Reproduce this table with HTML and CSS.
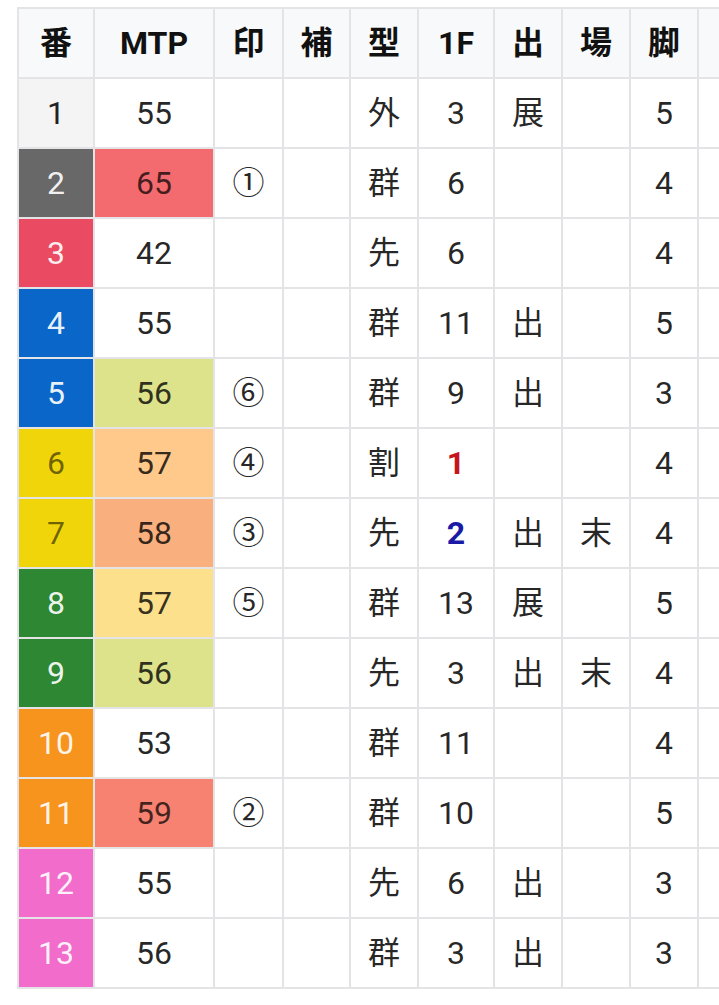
FILE: index.html
```html
<!DOCTYPE html>
<html lang="ja">
<head>
<meta charset="utf-8">
<title>出走表</title>
<link rel="stylesheet" href="styles.css">
</head>
<body>
<div class="wrap">
<table class="race">
  <colgroup>
    <col class="w-no"><col class="w-mtp"><col class="w-mark"><col class="w-sub"><col class="w-type"><col class="w-1f"><col class="w-out"><col class="w-place"><col class="w-leg"><col class="w-extra">
  </colgroup>
  <thead>
    <tr><th>番</th><th>MTP</th><th>印</th><th>補</th><th>型</th><th>1F</th><th>出</th><th>場</th><th>脚</th><th></th></tr>
  </thead>
  <tbody>
    <tr><td class="no n1">1</td><td>55</td><td></td><td></td><td>外</td><td>3</td><td>展</td><td></td><td>5</td><td></td></tr>
    <tr><td class="no n2">2</td><td class="m65">65</td><td>①</td><td></td><td>群</td><td>6</td><td></td><td></td><td>4</td><td></td></tr>
    <tr><td class="no n3">3</td><td>42</td><td></td><td></td><td>先</td><td>6</td><td></td><td></td><td>4</td><td></td></tr>
    <tr><td class="no n4">4</td><td>55</td><td></td><td></td><td>群</td><td>11</td><td>出</td><td></td><td>5</td><td></td></tr>
    <tr><td class="no n4">5</td><td class="m56">56</td><td>⑥</td><td></td><td>群</td><td>9</td><td>出</td><td></td><td>3</td><td></td></tr>
    <tr><td class="no n6">6</td><td class="m57a">57</td><td>④</td><td></td><td>割</td><td class="r1">1</td><td></td><td></td><td>4</td><td></td></tr>
    <tr><td class="no n6">7</td><td class="m58">58</td><td>③</td><td></td><td>先</td><td class="r2">2</td><td>出</td><td>末</td><td>4</td><td></td></tr>
    <tr><td class="no n8">8</td><td class="m57b">57</td><td>⑤</td><td></td><td>群</td><td>13</td><td>展</td><td></td><td>5</td><td></td></tr>
    <tr><td class="no n8">9</td><td class="m56">56</td><td></td><td></td><td>先</td><td>3</td><td>出</td><td>末</td><td>4</td><td></td></tr>
    <tr><td class="no n10">10</td><td>53</td><td></td><td></td><td>群</td><td>11</td><td></td><td></td><td>4</td><td></td></tr>
    <tr><td class="no n10">11</td><td class="m59">59</td><td>②</td><td></td><td>群</td><td>10</td><td></td><td></td><td>5</td><td></td></tr>
    <tr><td class="no n12">12</td><td>55</td><td></td><td></td><td>先</td><td>6</td><td>出</td><td></td><td>3</td><td></td></tr>
    <tr><td class="no n12">13</td><td>56</td><td></td><td></td><td>群</td><td>3</td><td>出</td><td></td><td>3</td><td></td></tr>
  </tbody>
</table>
</div>
</body>
</html>
```
FILE: styles.css
```css
html, body {
  margin: 0;
  padding: 0;
  background: #ffffff;
}
body {
  font-family: Roboto, "Noto Sans CJK JP", sans-serif;
  overflow: hidden;
}
.wrap {
  width: 719px;
  overflow: hidden;
  padding: 7px 0 0 17px;
  box-sizing: border-box;
}
.race {
  border-collapse: collapse;
  table-layout: fixed;
  width: 780px;
  font-size: 32px;
}
.w-no { width: 76px; }
.w-mtp { width: 120px; }
.w-mark { width: 69px; }
.w-sub { width: 67px; }
.w-type { width: 68px; }
.w-1f { width: 76px; }
.w-out { width: 68px; }
.w-place { width: 68px; }
.w-leg { width: 68px; }
.w-extra { width: 100px; }
.race tr { height: 70px; }
.race th, .race td {
  border: 2px solid #e4e4e6;
  text-align: center;
  vertical-align: middle;
  padding: 0;
  white-space: nowrap;
  line-height: 1;
}
.race th {
  background: #f8f9fa;
  color: #111;
  font-weight: 700;
}
.race td {
  color: rgba(0, 0, 0, 0.86);
  font-weight: 400;
}
.race td.no { color: rgba(255, 255, 255, 0.92); }
.race td.n1 { background: #f4f4f4; color: #222; }
.race td.n2 { background: #686868; }
.race td.n3 { background: #ea4b62; }
.race td.n4 { background: #0a66c8; }
.race td.n6 { background: #f0d50a; color: rgba(0, 0, 0, 0.55); }
.race td.n8 { background: #2e8833; }
.race td.n10 { background: #f7941e; }
.race td.n12 { background: #f26ccb; }
.race td.m65 { background: #f36a6f; color: rgba(0, 0, 0, 0.72); }
.race td.m56 { background: #dce38a; color: rgba(0, 0, 0, 0.8); }
.race td.m57a { background: #fec98a; color: rgba(0, 0, 0, 0.8); }
.race td.m58 { background: #f9b07e; color: rgba(0, 0, 0, 0.78); }
.race td.m57b { background: #fde08c; color: rgba(0, 0, 0, 0.8); }
.race td.m59 { background: #f88272; color: rgba(0, 0, 0, 0.72); }
.race td.r1 { color: #c4161c; font-weight: 700; }
.race td.r2 { color: #1a1aa6; font-weight: 700; }
```
